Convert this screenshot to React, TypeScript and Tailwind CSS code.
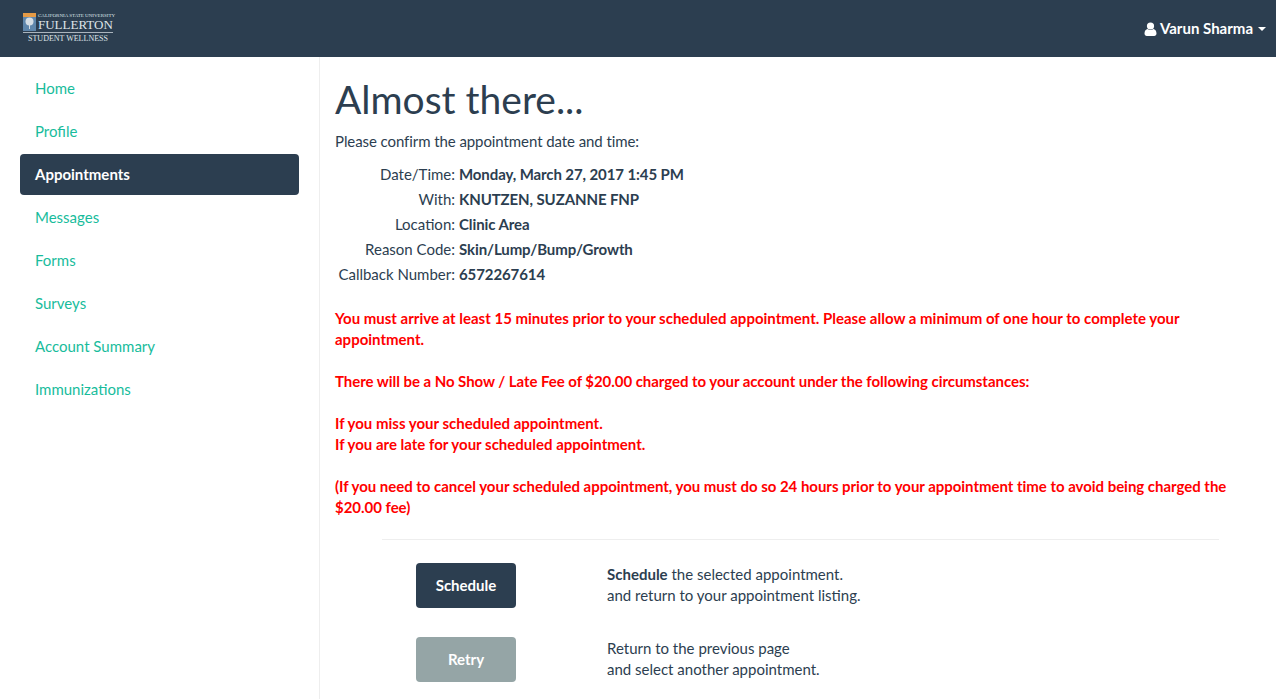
import React from 'react';

const navItems = ['Home', 'Profile', 'Appointments', 'Messages', 'Forms', 'Surveys', 'Account Summary', 'Immunizations'];

const details = [
  { label: 'Date/Time:', value: 'Monday, March 27, 2017 1:45 PM' },
  { label: 'With:', value: 'KNUTZEN, SUZANNE FNP' },
  { label: 'Location:', value: 'Clinic Area' },
  { label: 'Reason Code:', value: 'Skin/Lump/Bump/Growth' },
  { label: 'Callback Number:', value: '6572267614' },
];

const Logo: React.FC = () => (
  <div className="flex flex-col w-[90px] font-['Liberation_Serif',serif] text-[#dfe4e9]">
    <div className="flex items-stretch gap-[2px] border-b border-[#aab4bd] pb-[1px]">
      <svg width="13" height="18" viewBox="0 0 13 18" className="shrink-0">
        <rect width="13" height="18" fill="#5f86ab" />
        <rect width="13" height="4" fill="#e59a45" />
        <circle cx="6.5" cy="8.5" r="4" fill="#d5dde4" />
        <rect x="6" y="10" width="1" height="6" fill="#d5dde4" />
      </svg>
      <div className="flex flex-col">
        <span className="text-[5px] leading-[6px] whitespace-nowrap">CALIFORNIA STATE UNIVERSITY</span>
        <span className="text-[13px] leading-[12px] whitespace-nowrap">FULLERTON</span>
      </div>
    </div>
    <span className="text-[8px] leading-[10px] mt-[1px] text-center whitespace-nowrap">STUDENT WELLNESS</span>
  </div>
);

export default function App() {
  return (
    <div className="h-[699px] overflow-hidden flex flex-col bg-white font-['Lato',sans-serif] text-[15px] leading-[21px] text-[#2c3e50]">
      <header className="h-[57px] shrink-0 bg-[#2c3e50] flex items-center justify-between pl-[23px] pr-[10px]">
        <Logo />
        <div className="flex items-center text-white font-bold">
          <svg width="13" height="14" viewBox="0 0 13 14" className="mr-[3px]" fill="#fff">
            <circle cx="6.5" cy="4" r="3.6" />
            <path d="M0.5 11.5C0.5 8.8 2 7.2 3.6 7C4.4 7.7 5.4 8.1 6.5 8.1C7.6 8.1 8.6 7.7 9.4 7C11 7.2 12.5 8.8 12.5 11.5C12.5 13 11.5 14 10.2 14H2.8C1.5 14 0.5 13 0.5 11.5Z" />
          </svg>
          <span>Varun Sharma</span>
          <span className="ml-[5px] w-0 h-0 border-x-[4px] border-x-transparent border-t-[4px] border-t-white" />
        </div>
      </header>

      <div className="flex flex-1 min-h-0">
        <aside className="w-[320px] shrink-0 border-r border-[#eeeeee] pt-[11px] px-[20px]">
          <nav className="flex flex-col gap-[2px]">
            {navItems.map((item) =>
              item === 'Appointments' ? (
                <a key={item} className="h-[41px] flex items-center px-[15px] rounded-[4px] bg-[#2c3e50] text-white font-bold">
                  {item}
                </a>
              ) : (
                <a key={item} className="h-[41px] flex items-center px-[15px] text-[#18bc9c]">
                  {item}
                </a>
              ),
            )}
          </nav>
        </aside>

        <main className="flex-1 min-w-0 pl-[15px] pr-[15px]">
          <h1 className="mt-[17px] mb-[6px] text-[39px] leading-[51px] font-normal">Almost there...</h1>
          <p className="mb-[10px] tracking-[-0.08px]">Please confirm the appointment date and time:</p>

          <div className="flex flex-col">
            {details.map((row) => (
              <div key={row.label} className="flex h-[25px] items-center gap-[4px]">
                <span className="w-[120px] text-right whitespace-nowrap">{row.label}</span>
                <strong className="font-bold whitespace-nowrap tracking-[-0.1px]">{row.value}</strong>
              </div>
            ))}
          </div>

          <div className="mt-[21px] font-bold text-[#ff0000]">
            <p>You must arrive at least 15 minutes prior to your scheduled appointment. Please allow a minimum of one hour to complete your appointment.</p>
            <br />
            <p className="tracking-[-0.05px]">There will be a No Show / Late Fee of $20.00 charged to your account under the following circumstances:</p>
            <br />
            <p>If you miss your scheduled appointment.</p>
            <p>If you are late for your scheduled appointment.</p>
            <br />
            <p className="tracking-[-0.03px]">(If you need to cancel your scheduled appointment, you must do so 24 hours prior to your appointment time to avoid being charged the $20.00 fee)</p>
          </div>

          <div className="ml-[47px] mr-[42px] mt-[21px] border-t border-[#eeeeee] pt-[23px] pl-[34px] flex flex-col gap-[29px]">
            <div className="flex items-center">
              <button className="w-[100px] h-[45px] rounded-[4px] bg-[#2c3e50] text-white font-bold">Schedule</button>
              <p className="ml-[91px] mb-[2px]">
                <strong className="font-bold">Schedule</strong> the selected appointment.
                <br />
                and return to your appointment listing.
              </p>
            </div>
            <div className="flex items-center">
              <button className="w-[100px] h-[45px] rounded-[4px] bg-[#95a5a6] text-white font-bold">Retry</button>
              <p className="ml-[91px] mb-[2px]">
                Return to the previous page
                <br />
                and select another appointment.
              </p>
            </div>
          </div>
        </main>
      </div>
    </div>
  );
}
